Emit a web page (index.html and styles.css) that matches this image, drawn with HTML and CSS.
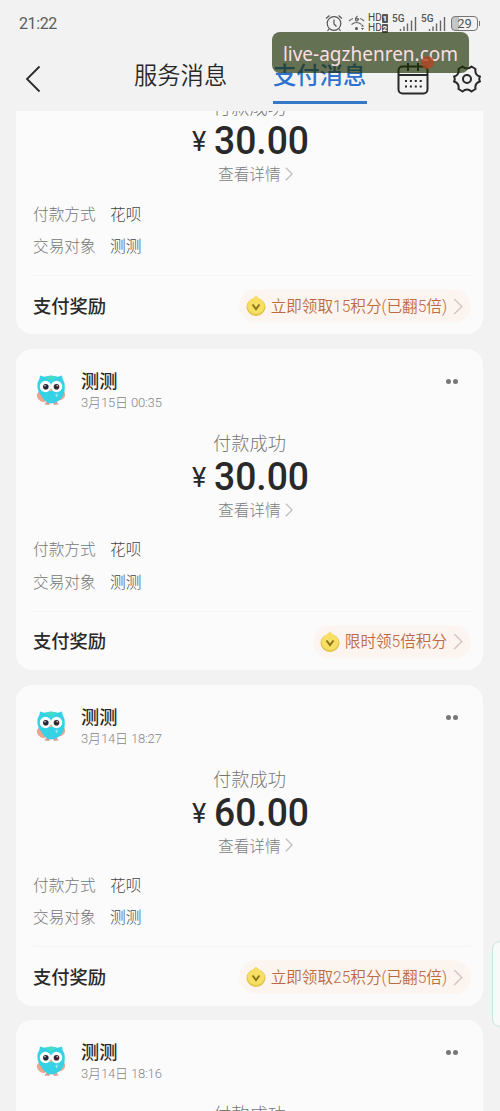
FILE: index.html
```
<!DOCTYPE html>
<html lang="zh-CN">
<head>
<meta charset="utf-8">
<title>支付消息</title>
<link rel="stylesheet" href="styles.css">
</head>
<body>
<svg class="defs" aria-hidden="true">
  <symbol id="owl" viewBox="0 0 30 32">
    <path d="M5 17C1.500 18 .5 20 1 22.500C2 26 6 28.500 9 28L12 21ZM24 18C28 16 29.500 18 29 22C28 25 25 27 22 26Z" fill="#eda58c"/>
    <path d="M8.500 30.500l2.500-4 3 3-1 1.500zM17 29.500l3-3 2.500 4-4.500.5z" fill="#d8a09a"/>
    <path d="M4 1.500Q7 3 10 2.500Q15 1 20 2.500Q23 3 26 1.500Q26 5 28.500 9Q29.500 17 27 22Q23 29 15 29.500Q9 29 5.500 22Q.5 17 1.500 9Q4 5 4 1.500Z" fill="#35d1e4"/>
    <path d="M9 3Q15 0 21 3L15 7Z" fill="#43dcc9"/>
    <circle cx="9.500" cy="12.500" r="5.700" fill="#fafdfd"/><circle cx="20.500" cy="12.500" r="5.700" fill="#fafdfd"/>
    <circle cx="9.800" cy="12.800" r="2.800" fill="#292736"/><circle cx="20.500" cy="12.800" r="2.800" fill="#35242c"/>
    <circle cx="9" cy="11.800" r=".7" fill="#fff"/><circle cx="21.200" cy="11.800" r=".7" fill="#fff"/>
    <path d="M13.500 15h3L15 18z" fill="#e8b48c"/>
    <path d="M19 21l3-1.500-1 4z" fill="#9eeef2"/>
  </symbol>
  <symbol id="coin" viewBox="0 0 20 22">
    <path d="M10 1L13 3.500Q19.500 6 19.500 12A9.500 9 0 0 1 .5 12Q.5 6 7 3.500Z" fill="#e2c44b"/>
    <path d="M10 1L13 3.500Q18.500 6 18.500 11A8.500 8 0 0 1 1.500 11Q1.500 6 7 3.500Z" fill="#f6df62"/>
    <path d="M6.500 9.500l3.500 4.500 3.500-4.500" fill="none" stroke="#8b751f" stroke-width="2"/>
  </symbol>
  <symbol id="next" viewBox="0 0 10 18">
    <path d="M1 1l8 8-8 8" fill="none" stroke="currentColor" stroke-width="1.500"/>
  </symbol>
  <symbol id="bars" viewBox="0 0 18 16">
    <path d="M1.500 13v2M5 10.500v4.500M8.500 7.500v7.500M12.500 4.500v10.500M16.500 1v14" fill="none" stroke="#666" stroke-width="1.400"/>
  </symbol>
</svg>

<header class="top">
  <div class="status">
    <span class="clock">21:22</span>
    <div class="indicators">
      <svg class="alarm" viewBox="0 0 18 18"><g fill="none" stroke="#555" stroke-width="1.200"><circle cx="9" cy="9.500" r="6.800"/><path d="M9 5.500v4.500l2.500 2.500M1 4.500L4.500 1.500M17 4.500L13.500 1.500M4 15l-1.500 2M14 15l1.500 2"/></g></svg>
      <svg class="wifi" viewBox="0 0 18 16"><g fill="none" stroke="#666" stroke-width="1.200"><path d="M1 6q2-2 4-2.500M12 3.500q2 .5 4 2.500M3.500 9.500q5-4 10 0M9.500 1Q7 3 7.500 5T10 5T7.500 4"/></g><circle cx="8.500" cy="13.500" r="1.500" fill="#555"/><path d="M13 11.500l1.500-2 1.500 2zM13 13l1.500 2 1.500-2z" fill="#555"/></svg>
      <span class="hd"><span>HD<b>1</b></span><span>HD<b>2</b></span></span>
      <span class="signal"><span>5G</span><svg><use href="#bars"/></svg></span>
      <span class="signal second"><span>5G</span><svg><use href="#bars"/></svg></span>
      <span class="battery">29</span>
    </div>
  </div>
  <nav class="nav">
    <svg class="back" viewBox="0 0 16 28"><path d="M14.500 1.500L2 14l12.500 12.500" fill="none" stroke="#292929" stroke-width="1.800"/></svg>
    <span class="tab">服务消息</span>
    <span class="tab active">支付消息</span>
    <svg class="calendar" viewBox="0 0 32 32"><g fill="none" stroke="#292929" stroke-width="2"><rect x="1.500" y="3.500" width="29" height="27" rx="4"/><path d="M2 12h28M11 0v8M21 0v8"/></g><path d="M8 18h17M8 23.500h17" stroke="#292929" stroke-width="2" stroke-dasharray="2 2.900"/></svg>
    <svg class="gear" viewBox="0 0 28 28"><g fill="none" stroke="#292929" stroke-width="2" stroke-linejoin="round"><path d="M9.500 1.500Q14 5.500 18.500 1.500L22.500 4Q21.500 10 27 11.500Q25.500 14 27 16.500Q21.500 18 22.500 24L18.500 26.500Q14 22.500 9.500 26.500L5.500 24Q6.500 18 1 16.500Q2.500 14 1 11.500Q6.500 10 5.500 4Z"/><circle cx="14" cy="14" r="4"/></g></svg>
  </nav>
  <div class="site">live-agzhenren.com</div>
  <span class="badge"></span>
</header>

<main class="feed">
  <article class="card">
    <div class="head"><svg class="avatar"><use href="#owl"/></svg><div><h2>测测</h2><time>3月15日 00:36</time></div><span class="more"><i></i><i></i></span></div>
    <p class="state">付款成功</p>
    <p class="amount"><span>¥</span><strong>30.00</strong></p>
    <p class="detail">查看详情<svg><use href="#next"/></svg></p>
    <dl><dt>付款方式</dt><dd>花呗</dd><dt>交易对象</dt><dd>测测</dd></dl>
    <div class="reward"><h3>支付奖励</h3><span class="pill"><svg class="coin"><use href="#coin"/></svg><span>立即领取15积分(已翻5倍)</span><svg class="next"><use href="#next"/></svg></span></div>
  </article>
  <article class="card">
    <div class="head"><svg class="avatar"><use href="#owl"/></svg><div><h2>测测</h2><time>3月15日 00:35</time></div><span class="more"><i></i><i></i></span></div>
    <p class="state">付款成功</p>
    <p class="amount"><span>¥</span><strong>30.00</strong></p>
    <p class="detail">查看详情<svg><use href="#next"/></svg></p>
    <dl><dt>付款方式</dt><dd>花呗</dd><dt>交易对象</dt><dd>测测</dd></dl>
    <div class="reward"><h3>支付奖励</h3><span class="pill"><svg class="coin"><use href="#coin"/></svg><span>限时领5倍积分</span><svg class="next"><use href="#next"/></svg></span></div>
  </article>
  <article class="card">
    <div class="head"><svg class="avatar"><use href="#owl"/></svg><div><h2>测测</h2><time>3月14日 18:27</time></div><span class="more"><i></i><i></i></span></div>
    <p class="state">付款成功</p>
    <p class="amount"><span>¥</span><strong>60.00</strong></p>
    <p class="detail">查看详情<svg><use href="#next"/></svg></p>
    <dl><dt>付款方式</dt><dd>花呗</dd><dt>交易对象</dt><dd>测测</dd></dl>
    <div class="reward"><h3>支付奖励</h3><span class="pill"><svg class="coin"><use href="#coin"/></svg><span>立即领取25积分(已翻5倍)</span><svg class="next"><use href="#next"/></svg></span></div>
  </article>
  <article class="card">
    <div class="head"><svg class="avatar"><use href="#owl"/></svg><div><h2>测测</h2><time>3月14日 18:16</time></div><span class="more"><i></i><i></i></span></div>
    <p class="state">付款成功</p>
  </article>
</main>
<div class="edge"></div>
</body>
</html>
```
FILE: styles.css
```
* { box-sizing: border-box; }
body {
  margin: 0;
  height: 1111px;
  display: flex;
  flex-direction: column;
  overflow: hidden;
  position: relative;
  background: #f2f2f2;
  font-family: Roboto, "Noto Sans CJK SC", sans-serif;
  font-weight: 300;
  color: #292929;
}
svg { display: block; flex: none; }
h2, h3, p, dl, dd { margin: 0; }
.defs { position: absolute; width: 0; height: 0; }

.top { height: 111px; flex: none; position: relative; }
.status {
  height: 46px;
  padding: 0 22px 0 19px;
  display: flex;
  align-items: center;
  justify-content: space-between;
}
.clock { font-size: 16px; line-height: 20px; padding-top: 1px; font-weight: 400; color: #5c5c5c; letter-spacing: -.4px; }
.indicators { display: flex; align-items: center; height: 20px; }
.alarm { width: 18px; height: 18px; margin-right: 5px; }
.wifi { width: 18px; height: 16px; margin-right: 2px; }
.hd { display: flex; flex-direction: column; font-size: 10px; line-height: 10px; font-weight: 400; color: #444; width: 25px; }
.hd span { display: flex; align-items: center; height: 10px; }
.hd b { background: #555; color: #fff; font-size: 8px; width: 6px; text-align: center; border-radius: 1px; line-height: 9px; height: 9px; }
.signal { display: flex; width: 24px; height: 18px; position: relative; align-items: flex-end; justify-content: flex-end; }
.signal.second { margin: 0 4px 0 5px; }
.signal span { position: absolute; left: -1px; top: 0; font-size: 10px; line-height: 9px; font-weight: 500; color: #555; }
.signal svg { width: 18px; height: 16px; }
.battery {
  width: 27px; height: 15px; margin-left: 1px;
  border: 1.500px solid #777; border-radius: 4px;
  background: linear-gradient(90deg, #c5c5c5 28%, transparent 28%);
  font-size: 13px; line-height: 13px; text-align: center; font-weight: 400; color: #555;
  position: relative;
}
.battery::after { content: ""; position: absolute; right: -3px; top: 4px; width: 1.500px; height: 5px; background: #777; }

.nav { display: flex; height: 59px; padding: 0 19px 0 25px; }
.back { width: 16px; height: 28px; margin-top: 19px; }
.tab {
  font-size: 23.300px; line-height: 34px; font-weight: 350;
  height: 45px; margin: 13px 0 0 93px; width: 94px; white-space: nowrap;
}
.tab.active { margin-left: 45px; color: #2c73cf; font-weight: 500; border-bottom: 3px solid #3478c7; }
.calendar { width: 32px; height: 32px; margin: 17px 0 0 30px; }
.gear { width: 28px; height: 30px; margin: 18px 0 0 24px; }
.badge { position: absolute; left: 421px; top: 56px; width: 13px; height: 13px; border-radius: 50%; background: rgba(178, 70, 35, .8); }
.site {
  position: absolute; left: 272px; top: 32px; width: 197px; height: 41px; border-radius: 8px;
  background: rgba(28, 46, 0, .66);
  color: #f9dfe5; text-align: center;
  font: 400 19px/44px "Noto Sans", sans-serif;
}

.feed { flex: 1; min-height: 0; overflow: hidden; padding: 0 17px 0 16px; }
.card {
  height: 321px; margin-bottom: 14.600px; padding: 22px 12px 0 17px;
  border-radius: 16px; background: #fbfbfc;
}
.card:first-child { margin-top: -97.600px; }
.head { display: flex; height: 61px; }
.avatar { width: 30px; height: 32px; margin: 3px 15px 0 3px; }
.head h2 { font-size: 18.200px; line-height: 22px; font-weight: 500; }
.head time { display: block; font-size: 13px; line-height: 20px; color: #858585; letter-spacing: -.15px; }
.more { display: flex; gap: 2px; margin: 8px 13px 0 auto; }
.more i { width: 5px; height: 5px; border-radius: 50%; background: #777; }
.state { font-size: 18.200px; line-height: 24px; text-align: center; color: #777; padding-right: 5px; }
.amount { display: flex; height: 40px; padding-left: 159px; align-items: center; }
.amount span { font: 400 27px/40px Roboto, sans-serif; width: 22px; padding-top: 4px; }
.amount strong { font: 500 39px/40px Roboto, sans-serif; padding-top: 2px; transform: scaleX(.955); transform-origin: left; }
.detail { display: flex; height: 20px; margin-top: 3.500px; padding-left: 185px; align-items: center; font-size: 15.700px; color: #7d7d7d; }
.detail svg { width: 8px; height: 14px; margin-left: 4px; color: #bbb; }
dl { display: grid; grid-template-columns: 77px 1fr; row-gap: 12.500px; margin-top: 20.700px; font-size: 15.700px; line-height: 20px; }
dt { color: #777; }
dd { color: #444; }
.reward { display: flex; justify-content: space-between; align-items: center; margin-top: 18.200px; padding-top: 13px; border-top: 1px solid #f5f5f6; height: 48px; }
.reward h3 { font-size: 18.300px; line-height: 24px; font-weight: 500; padding-top: 1px; }
.pill {
  display: flex; align-items: center; height: 34px; padding: 0 8px 0 7px; border-radius: 17px;
  background: #fcf4ef; box-shadow: inset 0 0 5px #fbf9f8;
  font-size: 15.600px; line-height: 20px; font-weight: 350; color: #bd6a43; white-space: nowrap;
}
.pill span { padding-top: 1px; }
.coin { width: 20px; height: 22px; margin-right: 5px; }
.next { width: 10px; height: 17px; margin-left: 6px; color: #d7c5be; }
.edge {
  position: absolute; right: -8px; top: 941px; width: 16px; height: 86px;
  border: 1.500px solid #c5e7e2; border-radius: 9px; background: #f8fafa;
}
```
